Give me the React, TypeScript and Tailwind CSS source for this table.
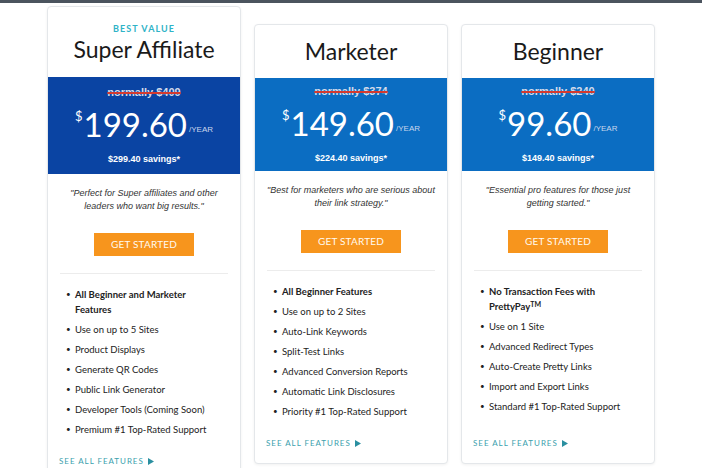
import React from 'react';

interface Plan {
  name: string;
  badge?: string;
  normally: string;
  price: string;
  savings: string;
  quote: string[];
  features: { text: React.ReactNode; bold?: boolean }[];
  dark?: boolean;
}

const plans: Plan[] = [
  {
    name: 'Super Affiliate',
    badge: 'BEST VALUE',
    normally: 'normally $409',
    price: '199.60',
    savings: '$299.40 savings*',
    quote: ['"Perfect for Super affiliates and other', 'leaders who want big results."'],
    dark: true,
    features: [
      { text: 'All Beginner and Marketer Features', bold: true },
      { text: 'Use on up to 5 Sites' },
      { text: 'Product Displays' },
      { text: 'Generate QR Codes' },
      { text: 'Public Link Generator' },
      { text: 'Developer Tools (Coming Soon)' },
      { text: 'Premium #1 Top-Rated Support' }
    ]
  },
  {
    name: 'Marketer',
    normally: 'normally $374',
    price: '149.60',
    savings: '$224.40 savings*',
    quote: ['"Best for marketers who are serious about', 'their link strategy."'],
    features: [
      { text: 'All Beginner Features', bold: true },
      { text: 'Use on up to 2 Sites' },
      { text: 'Auto-Link Keywords' },
      { text: 'Split-Test Links' },
      { text: 'Advanced Conversion Reports' },
      { text: 'Automatic Link Disclosures' },
      { text: 'Priority #1 Top-Rated Support' }
    ]
  },
  {
    name: 'Beginner',
    normally: 'normally $240',
    price: '99.60',
    savings: '$149.40 savings*',
    quote: ['"Essential pro features for those just', 'getting started."'],
    features: [
      {
        text: (
          <>
            No Transaction Fees with PrettyPay
            <span className="relative -top-[3px] text-[7px] leading-none">TM</span>
          </>
        ),
        bold: true
      },
      { text: 'Use on 1 Site' },
      { text: 'Advanced Redirect Types' },
      { text: 'Auto-Create Pretty Links' },
      { text: 'Import and Export Links' },
      { text: 'Standard #1 Top-Rated Support' }
    ]
  }
];

const PlanCard: React.FC<{ plan: Plan }> = ({ plan }) => (
  <div className="w-[194px] flex flex-col bg-white border border-[#e4e7ea] rounded-[4px] shadow-[0_1px_3px_rgba(0,0,0,0.06)] overflow-hidden">
    {plan.badge ? (
      <div className="pt-[16px] pb-[14px] text-center">
        <div className="text-[9px] leading-[12px] font-bold tracking-[0.12em] text-[#2fb3c7]">{plan.badge}</div>
        <div className="text-[23px] leading-[28px] text-[#1a1a1a]">{plan.name}</div>
      </div>
    ) : (
      <div className="pt-[12px] pb-[13px] text-center">
        <div className="text-[23px] leading-[28px] text-[#1a1a1a]">{plan.name}</div>
      </div>
    )}

    <div
      className={
        plan.dark
          ? 'bg-[#0a44a3] flex flex-col items-center pt-[8px] pb-[9px]'
          : 'bg-[#0b6dc2] flex flex-col items-center pt-[6px] pb-[7px]'
      }
    >
      <div className="font-['Liberation_Sans'] font-bold text-[11px] leading-[14px] text-[#d3dbea] line-through decoration-[#d33a2f] decoration-[1.5px]">
        {plan.normally}
      </div>
      <div className="flex items-start mt-[6px] h-[38px] text-white">
        <span className="text-[13px] leading-[13px] mt-[5px] mr-[1px]">$</span>
        <span className="text-[33px] leading-[38px]">{plan.price}</span>
        <span className="text-[8px] leading-[8px] mt-[21px] ml-[2px] text-[#c9d6ec] font-['Liberation_Sans']">/YEAR</span>
      </div>
      <div className="font-['Liberation_Sans'] font-bold text-[9px] leading-[12px] mt-[10px] text-white">{plan.savings}</div>
    </div>

    <div className="pt-[13px] px-[12px] text-center font-['Liberation_Sans'] italic text-[9px] leading-[13px] text-[#333333]">
      {plan.quote.map((q) => (
        <div key={q}>{q}</div>
      ))}
    </div>

    <div className="flex justify-center mt-[20px]">
      <div className="w-[100px] h-[23px] bg-[#f7951d] flex items-center justify-center text-[10px] tracking-[0.02em] text-[#fffaf0]">
        GET STARTED
      </div>
    </div>

    <div className="mx-[12px] mt-[17px] h-px bg-[#ececec]" />

    <ul className="pt-[13px] pl-[18px] pr-[24px] flex flex-col gap-[5px] text-[9.5px] leading-[15px] text-[#222222]">
      {plan.features.map((f, i) => (
        <li key={i} className="flex">
          <span className="w-[9px] shrink-0 text-[8px]">•</span>
          <span className={f.bold ? 'font-bold' : ''}>{f.text}</span>
        </li>
      ))}
    </ul>

    <div className="mt-auto pt-[18px] pb-[14px] pl-[11px] flex items-center text-[8px] leading-[12px] tracking-[0.12em] text-[#3c9fae]">
      SEE ALL FEATURES
      <svg width="6" height="7" viewBox="0 0 6 7" className="ml-[4px]">
        <path d="M0 0 L6 3.5 L0 7 Z" fill="#2a8fa0" />
      </svg>
    </div>
  </div>
);

export default function App() {
  return (
    <div className="min-h-[468px] bg-white font-['Lato',sans-serif] overflow-hidden">
      <div className="h-[3px] bg-[#4b545e]" />
      <div className="flex justify-center items-start gap-[13px] pt-[3px]">
        <PlanCard plan={plans[0]} />
        <div className="flex gap-[13px] mt-[18px]">
          <PlanCard plan={plans[1]} />
          <PlanCard plan={plans[2]} />
        </div>
      </div>
    </div>
  );
}
